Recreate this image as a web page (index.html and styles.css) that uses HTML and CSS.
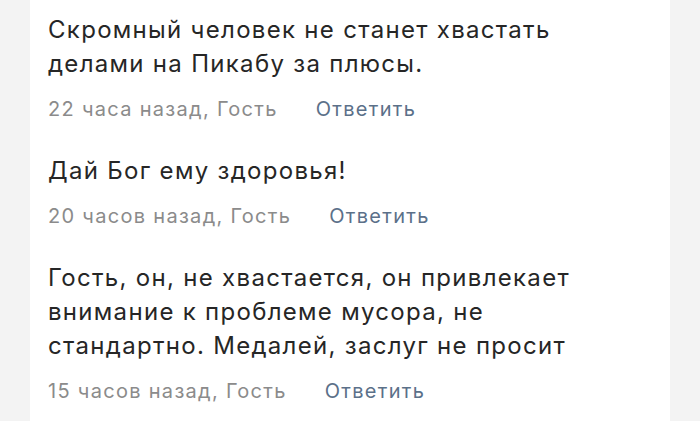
FILE: index.html
```html
<!DOCTYPE html>
<html lang="ru">
<head>
<meta charset="utf-8">
<link rel="stylesheet" href="styles.css">
</head>
<body>
<div class="card">
  <div class="comment">
    <p class="text">Скромный человек не станет хвастать делами на Пикабу за плюсы.</p>
    <div class="meta"><span class="info">22 часа назад, Гость</span><a class="reply">Ответить</a></div>
  </div>
  <div class="comment">
    <p class="text">Дай Бог ему здоровья!</p>
    <div class="meta"><span class="info">20 часов назад, Гость</span><a class="reply">Ответить</a></div>
  </div>
  <div class="comment">
    <p class="text">Гость, он, не хвастается, он привлекает внимание к проблеме мусора, не стандартно. Медалей, заслуг не просит</p>
    <div class="meta"><span class="info">15 часов назад, Гость</span><a class="reply">Ответить</a></div>
  </div>
</div>
</body>
</html>
```
FILE: styles.css
```css
html, body {
  margin: 0;
  padding: 0;
  background: #f3f3f3;
  height: 100%;
}
body {
  font-family: Inter, "Noto Sans", sans-serif;
}
.card {
  margin: 0 30px;
  background: #ffffff;
  min-height: 100%;
  padding: 13px 32px 0 18px;
  display: flex;
  flex-direction: column;
  gap: 33px;
}
.text {
  margin: 0;
  font-size: 24px;
  line-height: 34px;
  letter-spacing: 1.3px;
  color: #262626;
}
.meta {
  margin-top: 16px;
  display: flex;
  font-size: 20px;
  line-height: 24px;
  letter-spacing: 1.3px;
}
.info {
  color: #8b8b8b;
}
.reply {
  margin-left: 38px;
  color: #5b7089;
}
```
